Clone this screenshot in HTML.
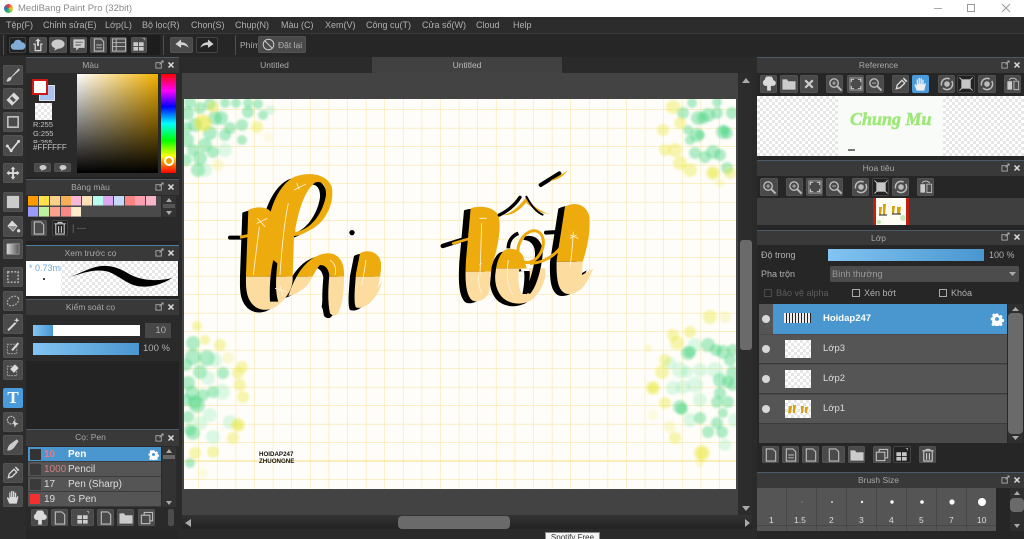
<!DOCTYPE html>
<html><head><meta charset="utf-8"><style>
html,body{margin:0;padding:0;background:#262626;width:1024px;height:539px;overflow:hidden}
#r{position:relative;width:1024px;height:539px;overflow:hidden;background:#272727;font-family:"Liberation Sans","Noto Sans CJK SC",sans-serif;font-size:9px;color:#b0b0b0;filter:blur(.3px)}
#r div{position:absolute;box-sizing:border-box}
.t{white-space:nowrap;line-height:12px}
#r .h{background:#393939;border-top:1px solid #4a5a68;text-align:center;line-height:15px;color:#a8a8a8;height:16px;font-size:8.500px;padding-right:24px}
.b{background:#4a4a4a;border-radius:2px;box-shadow:inset 0 0 0 1px #525252}
.b svg,.k svg{position:absolute;left:50%;top:50%;transform:translate(-50%,-50%);width:15px;height:15px;opacity:.88}
.k{background:#222;border-radius:2px;box-shadow:inset 0 0 0 1px #444}
.c{background-color:#fff;background-image:linear-gradient(45deg,#e6e6e6 25%,transparent 25%,transparent 75%,#e6e6e6 75%),linear-gradient(45deg,#e6e6e6 25%,transparent 25%,transparent 75%,#e6e6e6 75%);background-size:6px 6px;background-position:0 0,3px 3px}
.bar{background:linear-gradient(90deg,#82c4f2,#4a96cf)}
.row{background:#555;border-bottom:1px solid #3b3b3b}
svg{display:block}
</style></head><body><div id="r">
<svg width="0" height="0" style="position:absolute"><defs>
<symbol id="pn" viewBox="0 0 16 16"><path d="M1 15c1-3 2-5 5-5l8-9 1.500 1.500-9 8c0 3-2 4.500-5.500 4.500z" fill="#e6e6e6"/></symbol>
<symbol id="er" viewBox="0 0 16 16"><path d="M9 1l6 6-8 8-6-6z" fill="#eee"/><path d="M4.500 7.500l4 4 2.500-2.500-4-4z" fill="#555"/></symbol>
<symbol id="sq" viewBox="0 0 16 16"><rect x="2.500" y="2.500" width="11" height="11" fill="none" stroke="#ddd" stroke-width="1.600"/></symbol>
<symbol id="ln" viewBox="0 0 16 16"><path d="M2 8l4 5 8-10" fill="none" stroke="#eee" stroke-width="1.800"/><circle cx="6" cy="13" r="1.600" fill="#eee"/><circle cx="2" cy="8" r="1.600" fill="#eee"/><circle cx="14" cy="3" r="1.600" fill="#eee"/></symbol>
<symbol id="mv" viewBox="0 0 16 16"><path d="M8 1l2.500 3H9v3h3V5.500L15 8l-3 2.500V9H9v3h1.500L8 15l-2.500-3H7V9H4v1.500L1 8l3-2.500V7h3V4H5.500z" fill="#eee"/></symbol>
<symbol id="fl" viewBox="0 0 16 16"><rect x="1.500" y="1.500" width="13" height="13" fill="#ddd"/></symbol>
<symbol id="bk" viewBox="0 0 16 16"><path d="M7 1l6 6-5 6-6-6z" fill="#eee"/><path d="M3 7h9l-4 5z" fill="#999"/><circle cx="14" cy="12" r="1.800" fill="#eee"/></symbol>
<symbol id="gr" viewBox="0 0 16 16"><defs><linearGradient id="g1"><stop offset="0" stop-color="#eee"/><stop offset="1" stop-color="#555"/></linearGradient></defs><rect x="1.500" y="2.500" width="13" height="11" fill="url(#g1)" stroke="#ccc" stroke-width=".6"/></symbol>
<symbol id="ss" viewBox="0 0 16 16"><rect x="2.500" y="2.500" width="11" height="11" fill="none" stroke="#ccc" stroke-width="1.500" stroke-dasharray="2 1.500"/></symbol>
<symbol id="ls" viewBox="0 0 16 16"><ellipse cx="8" cy="8" rx="6.500" ry="4.500" transform="rotate(-30 8 8)" fill="none" stroke="#bbb" stroke-width="1.300" stroke-dasharray="2 1.300"/></symbol>
<symbol id="wd" viewBox="0 0 16 16"><path d="M2 14L10 6l1.500 1.500-8 8z" fill="#eee"/><path d="M12 1l.8 2.200L15 4l-2.200.8L12 7l-.8-2.200L9 4l2.200-.8z" fill="#eee"/></symbol>
<symbol id="sp" viewBox="0 0 16 16"><rect x="2" y="4" width="10" height="10" fill="none" stroke="#aaa" stroke-dasharray="2 1"/><path d="M6 10L13 2l1.500 1.500L8 11z" fill="#eee"/></symbol>
<symbol id="se" viewBox="0 0 16 16"><rect x="2" y="4" width="10" height="10" fill="none" stroke="#aaa" stroke-dasharray="2 1"/><path d="M10 2l4 4-5 5-4-4z" fill="#eee"/></symbol>
<symbol id="ar" viewBox="0 0 16 16"><circle cx="6" cy="6" r="4" fill="none" stroke="#ccc" stroke-width="1.300" stroke-dasharray="2 1"/><path d="M8 7l6 3-3 1-1 3z" fill="#eee"/></symbol>
<symbol id="kn" viewBox="0 0 16 16"><path d="M2 14c0-3 1-5 3-7l7-5 2 2-5 7c-2 2-4 3-7 3z" fill="#ddd"/></symbol>
<symbol id="dr" viewBox="0 0 16 16"><path d="M3 13l1-4 5-5 3 3-5 5z" fill="none" stroke="#eee" stroke-width="1.400"/><path d="M10 2l1-1 4 4-2 1z" fill="#eee"/></symbol>
<symbol id="hd" viewBox="0 0 16 16"><path d="M4 15L1.500 9l1-1L4 10V3h1.300v5h.7V1.500h1.400V8H8V2h1.400v6h.6V3.500h1.400V9l1.400-2 1 .6L12 15z" fill="#eee"/></symbol>
<symbol id="cl" viewBox="0 0 16 16"><path d="M4 13a3.500 3.500 0 0 1-.5-7 4.500 4.500 0 0 1 8.500-1 4 4 0 0 1 0 8z" fill="#8dc0ee"/></symbol>
<symbol id="up" viewBox="0 0 16 16"><path d="M3 7h2v7h6V7h2" fill="none" stroke="#eee" stroke-width="1.300"/><path d="M8 1l3 3H9v5H7V4H5z" fill="#eee"/></symbol>
<symbol id="bu" viewBox="0 0 16 16"><ellipse cx="8" cy="7" rx="7" ry="5" fill="#ddd"/><path d="M5 11l-1 3 4-2z" fill="#ddd"/></symbol>
<symbol id="ms" viewBox="0 0 16 16"><path d="M2 2h12v9H8l-3 3v-3H2z" fill="#ddd"/><path d="M4 5h8M4 8h6" stroke="#555"/></symbol>
<symbol id="dc" viewBox="0 0 16 16"><path d="M3 1.500h7l3 3v10H3z" fill="none" stroke="#ccc" stroke-width="1.200"/></symbol>
<symbol id="ld" viewBox="0 0 16 16"><path d="M3 1.500h7l3 3v10H3z" fill="none" stroke="#ccc" stroke-width="1.200"/><path d="M5 8h6M5 11h6" stroke="#ccc"/></symbol>
<symbol id="li" viewBox="0 0 16 16"><rect x="1" y="1.500" width="14" height="13" fill="none" stroke="#ccc"/><path d="M1 5.500h14M1 9.500h14M5 1.500v13" stroke="#ccc"/></symbol>
<symbol id="gd" viewBox="0 0 16 16"><path d="M2 5h5v4H2zM8 5h5v4H8zM2 10h5v4H2zM8 10h5v4H8z" fill="#ddd"/><path d="M12 1h2v2" stroke="#aaa" fill="none"/></symbol>
<symbol id="un" viewBox="0 0 16 16"><path d="M1 7l6-5v3c4 0 7 2 8 6-2-2-4-3-8-3v3z" fill="#e8e8e8"/></symbol>
<symbol id="rd" viewBox="0 0 16 16"><path d="M15 7L9 2v3c-4 0-7 2-8 6 2-2 4-3 8-3v3z" fill="#e8e8e8"/></symbol>
<symbol id="no" viewBox="0 0 16 16"><circle cx="8" cy="8" r="6.500" fill="none" stroke="#ccc" stroke-width="1.200"/><path d="M3.500 3.500l9 9" stroke="#ccc" stroke-width="1.200"/></symbol>
<symbol id="tr" viewBox="0 0 16 16"><path d="M2 3.500h12M6 3.500V2h4v1.500M3.500 4v10.500h9V4M6.500 6v7M9.500 6v7" fill="none" stroke="#ddd" stroke-width="1.200"/></symbol>
<symbol id="cu" viewBox="0 0 16 16"><path d="M4 10a3.500 3.500 0 0 1-.5-6.500 4.500 4.500 0 0 1 9 .5A3 3 0 0 1 12 10h-2v5H6v-5z" fill="#eee"/></symbol>
<symbol id="fo" viewBox="0 0 16 16"><path d="M1 3h5l1 2h8v9H1z" fill="#ddd"/></symbol>
<symbol id="cp" viewBox="0 0 16 16"><rect x="2" y="5" width="9" height="9" fill="none" stroke="#ccc" stroke-width="1.200"/><path d="M5 5V2h9v9h-3" fill="none" stroke="#ccc" stroke-width="1.200"/></symbol>
<symbol id="xx" viewBox="0 0 16 16"><path d="M4 4l8 8M12 4l-8 8" stroke="#ddd" stroke-width="2.400"/></symbol>
<symbol id="zi" viewBox="0 0 16 16"><circle cx="7" cy="7" r="4.500" fill="none" stroke="#ccc" stroke-width="1.500"/><path d="M10.500 10.500L15 15" stroke="#ccc" stroke-width="2"/><path d="M5 7h4M7 5v4" stroke="#ccc"/></symbol>
<symbol id="zo" viewBox="0 0 16 16"><circle cx="7" cy="7" r="4.500" fill="none" stroke="#ccc" stroke-width="1.500"/><path d="M10.500 10.500L15 15" stroke="#ccc" stroke-width="2"/><path d="M5 7h4" stroke="#ccc"/></symbol>
<symbol id="ft" viewBox="0 0 16 16"><rect x="1.500" y="1.500" width="13" height="13" fill="none" stroke="#aaa"/><path d="M3 6V3h3M13 6V3h-3M3 10v3h3M13 10v3h-3" fill="none" stroke="#eee"/></symbol>
<symbol id="ro" viewBox="0 0 16 16"><circle cx="8" cy="8" r="6" fill="none" stroke="#ccc" stroke-width="1.600" stroke-dasharray="14 3"/><circle cx="8" cy="8" r="3" fill="#ccc"/></symbol>
<symbol id="fs" viewBox="0 0 16 16"><path d="M3 3h10v10H3z" fill="#ddd"/><path d="M1 1l3 3M15 1l-3 3M1 15l3-3M15 15l-3-3" stroke="#ddd"/></symbol>
<symbol id="fp" viewBox="0 0 16 16"><path d="M2 5h5v9H2z" fill="#ddd"/><path d="M9 5h5v9H9z" fill="none" stroke="#ccc"/><path d="M4 4c1-3 6-3 8 0" fill="none" stroke="#ccc"/></symbol>
<symbol id="gear" viewBox="0 0 16 16"><path d="M6.500 1h3l.4 2 1.500.7 1.800-1 2 2-1 1.800.7 1.500 2 .4v3l-2 .4-.7 1.500 1 1.800-2 2-1.800-1-1.500.7-.4 2h-3l-.4-2-1.500-.7-1.800 1-2-2 1-1.800L2 9.900 0 9.500v-3l2-.4.700-1.500-1-1.800 2-2 1.800 1 1.500-.7z" transform="translate(.8 .8) scale(.9)" fill="#fff"/><circle cx="8" cy="8" r="2.200" fill="#4a96cf"/></symbol>
<symbol id="pop" viewBox="0 0 10 10"><rect x="1" y="3" width="6" height="6" fill="none" stroke="#aaa"/><path d="M5 5l4-4M7 1h2v2" fill="none" stroke="#aaa"/></symbol>
</defs></svg>

<!-- title bar -->
<div style="left:0;top:0;width:1024px;height:17px;background:#fff"></div>
<div style="left:4px;top:4px;width:9px;height:9px;border-radius:50%;background:conic-gradient(#e33,#ec3,#3b5,#27c,#e33)"></div>
<div class="t" style="left:18px;top:3px;color:#8a8a8a;font-size:9.500px">MediBang Paint Pro (32bit)</div>
<div style="left:934px;top:8px;width:8px;height:1px;background:#aaa"></div>
<div style="left:967px;top:4px;width:8px;height:8px;border:1px solid #999"></div>
<svg style="position:absolute;left:1001px;top:3px" width="10" height="10"><path d="M1 1l8 8M9 1l-8 8" stroke="#999"/></svg>

<!-- menu -->
<div style="left:0;top:17px;width:1024px;height:16px;background:#2c2c2c"></div>
<div style="left:0;top:33px;width:1024px;height:1px;background:#383838"></div>
<div class="t" style="left:6px;top:19px">Tệp(F)</div><div class="t" style="left:43px;top:19px">Chỉnh sửa(E)</div><div class="t" style="left:105px;top:19px">Lớp(L)</div><div class="t" style="left:142px;top:19px">Bộ lọc(R)</div><div class="t" style="left:191px;top:19px">Chọn(S)</div><div class="t" style="left:235px;top:19px">Chụp(N)</div><div class="t" style="left:281px;top:19px">Màu (C)</div><div class="t" style="left:325px;top:19px">Xem(V)</div><div class="t" style="left:366px;top:19px">Công cụ(T)</div><div class="t" style="left:422px;top:19px">Cửa sổ(W)</div><div class="t" style="left:476px;top:19px">Cloud</div><div class="t" style="left:513px;top:19px">Help</div>

<!-- toolbar -->
<div style="left:0;top:34px;width:1024px;height:22px;background:#262626"></div>
<div style="left:3px;top:35px;width:1px;height:20px;background:#3d5468"></div>
<div style="left:163px;top:35px;width:1px;height:20px;background:#3d5468"></div>
<div style="left:235px;top:35px;width:1px;height:20px;background:#3d5468"></div>
<div style="left:7px;top:35px;width:153px;height:20px;background:#1d1d1d"></div>
<div class="k" style="left:9px;top:37px;width:17px;height:16px"><svg><use href="#cl"/></svg></div>
<div class="b" style="left:29px;top:37px;width:18px;height:16px"><svg><use href="#up"/></svg></div>
<div class="b" style="left:49px;top:37px;width:18px;height:16px"><svg><use href="#bu"/></svg></div>
<div class="b" style="left:70px;top:37px;width:17px;height:16px"><svg><use href="#ms"/></svg></div>
<div class="b" style="left:90px;top:37px;width:17px;height:16px"><svg><use href="#ld"/></svg></div>
<div class="b" style="left:110px;top:37px;width:17px;height:16px"><svg><use href="#li"/></svg></div>
<div class="b" style="left:131px;top:37px;width:16px;height:16px"><svg><use href="#gd"/></svg></div>
<div class="b" style="left:170px;top:37px;width:23px;height:16px"><svg><use href="#un"/></svg></div>
<div class="k" style="left:196px;top:37px;width:22px;height:16px"><svg><use href="#rd"/></svg></div>
<div class="t" style="left:240px;top:39px;font-size:8.500px">Phím</div>
<div class="b" style="left:258px;top:36px;width:48px;height:17px"></div>
<svg style="position:absolute;left:262px;top:38px" width="13" height="13"><use href="#no"/></svg>
<div class="t" style="left:278px;top:39px;font-size:8.500px">Đặt lại</div>

<!-- left tools -->
<div style="left:0;top:56px;width:26px;height:483px;background:#2c2c2c"></div>
<div class="b" style="left:3px;top:65px;width:20px;height:20px"><svg><use href="#pn"/></svg></div>
<div class="b" style="left:3px;top:88px;width:20px;height:21px"><svg><use href="#er"/></svg></div>
<div class="b" style="left:3px;top:112px;width:20px;height:20px"><svg><use href="#sq"/></svg></div>
<div class="b" style="left:3px;top:135px;width:20px;height:21px"><svg><use href="#ln"/></svg></div>
<div class="b" style="left:3px;top:163px;width:20px;height:20px"><svg><use href="#mv"/></svg></div>
<div class="b" style="left:3px;top:192px;width:20px;height:20px"><svg><use href="#fl"/></svg></div>
<div class="b" style="left:3px;top:216px;width:20px;height:21px"><svg><use href="#bk"/></svg></div>
<div class="b" style="left:3px;top:239px;width:20px;height:20px"><svg><use href="#gr"/></svg></div>
<div class="b" style="left:3px;top:267px;width:20px;height:20px"><svg><use href="#ss"/></svg></div>
<div class="b" style="left:3px;top:291px;width:20px;height:20px"><svg><use href="#ls"/></svg></div>
<div class="b" style="left:3px;top:314px;width:20px;height:20px"><svg><use href="#wd"/></svg></div>
<div class="b" style="left:3px;top:337px;width:20px;height:21px"><svg><use href="#sp"/></svg></div>
<div class="b" style="left:3px;top:360px;width:20px;height:20px"><svg><use href="#se"/></svg></div>
<div style="left:3px;top:388px;width:20px;height:20px;background:#4a9bdc;border-radius:2px;color:#fff;font:bold 17px/20px 'Liberation Serif',serif;text-align:center">T</div>
<div class="b" style="left:3px;top:412px;width:20px;height:20px"><svg><use href="#ar"/></svg></div>
<div class="b" style="left:3px;top:435px;width:20px;height:20px"><svg><use href="#kn"/></svg></div>
<div class="b" style="left:3px;top:463px;width:20px;height:20px"><svg><use href="#dr"/></svg></div>
<div class="b" style="left:3px;top:486px;width:20px;height:21px"><svg><use href="#hd"/></svg></div>

<!-- left panels -->
<div style="left:26px;top:57px;width:153px;height:473px;background:#232323"></div>
<!-- colour -->
<div class="h" style="left:26px;top:57px;width:153px">Màu</div>
<div style="left:26px;top:73px;width:153px;height:104px;background:#2a2a2a"></div>
<svg style="position:absolute;left:155px;top:60px" width="9" height="9"><use href="#pop"/></svg>
<svg style="position:absolute;left:166px;top:60px" width="10" height="10"><use href="#xx"/></svg>
<div style="left:39px;top:85px;width:16px;height:16px;background:#a9c3f0;border:1px solid #dde"></div>
<div style="left:32px;top:79px;width:16px;height:16px;background:#fff;border:2px solid #d01818"></div>
<div class="c" style="left:35px;top:103px;width:17px;height:17px"></div>
<div class="t" style="left:33px;top:120px;font-size:7.500px;line-height:9px;color:#c4c4c4">R:255<br>G:255</div>
<div class="t" style="left:33px;top:139px;font-size:7.500px;line-height:7px;height:4px;overflow:hidden;color:#c4c4c4">B:255</div>
<div class="t" style="left:33px;top:143px;font-size:8px;line-height:9px;color:#c4c4c4">#FFFFFF</div>
<div class="b" style="left:34px;top:163px;width:17px;height:9px"><svg style="width:8px;height:8px"><use href="#bu"/></svg></div>
<div class="b" style="left:54px;top:163px;width:17px;height:9px"><svg style="width:8px;height:8px"><use href="#bu"/></svg></div>
<div style="left:77px;top:74px;width:81px;height:99px;background:linear-gradient(to bottom,transparent,#000),linear-gradient(to right,#fff,#f2b000)"></div>
<div style="left:161px;top:74px;width:15px;height:99px;background:linear-gradient(to bottom,#f00 0%,#f0f 17%,#00f 33%,#0ff 50%,#0f0 67%,#ff0 83%,#f80 90%,#f00 100%)"></div>
<div style="left:164px;top:156px;width:10px;height:10px;border-radius:50%;border:2px solid #fff;background:#f3a000"></div>
<!-- palette -->
<div class="h" style="left:26px;top:179px;width:153px">Bảng màu</div>
<div style="left:26px;top:195px;width:153px;height:46px;background:#2a2a2a"></div>
<svg style="position:absolute;left:155px;top:182px" width="9" height="9"><use href="#pop"/></svg>
<svg style="position:absolute;left:166px;top:182px" width="10" height="10"><use href="#xx"/></svg>
<div style="left:28px;top:196px;width:133px;height:21px;background:#4a4a4a"></div>
<svg style="position:absolute;left:28px;top:196px" width="133" height="21">
<rect x="0" y="0" width="10" height="9.500" fill="#ff9a00"/><rect x="11" y="0" width="10" height="9.500" fill="#ffe24a"/><rect x="22" y="0" width="10" height="9.500" fill="#fcd28a"/><rect x="33" y="0" width="10" height="9.500" fill="#f8ae56"/><rect x="43" y="0" width="10" height="9.500" fill="#f8b8d8"/><rect x="54" y="0" width="10" height="9.500" fill="#fde0b8"/><rect x="65" y="0" width="10" height="9.500" fill="#b8fbf0"/><rect x="75" y="0" width="10" height="9.500" fill="#dba8f0"/><rect x="86" y="0" width="10" height="9.500" fill="#c4daf8"/><rect x="97" y="0" width="10" height="9.500" fill="#f98484"/><rect x="107" y="0" width="10" height="9.500" fill="#f8a0b0"/><rect x="118" y="0" width="10" height="9.500" fill="#f8b4c8"/>
<rect x="0" y="11" width="10" height="9.500" fill="#9a9af8"/><rect x="11" y="11" width="10" height="9.500" fill="#bcf0a0"/><rect x="22" y="11" width="10" height="9.500" fill="#fca090"/><rect x="33" y="11" width="10" height="9.500" fill="#f88888"/><rect x="43" y="11" width="10" height="9.500" fill="#fdeccc"/></svg>
<div style="left:162px;top:196px;width:14px;height:21px;background:#333"></div>
<svg style="position:absolute;left:162px;top:196px" width="14" height="21"><path d="M4 6l3-4 3 4zM4 15l3 4 3-4z" fill="#aaa"/><rect x="1" y="8" width="12" height="4" fill="#555"/></svg>
<div class="b" style="left:31px;top:220px;width:16px;height:16px"><svg><use href="#dc"/></svg></div>
<div class="k" style="left:52px;top:220px;width:16px;height:16px"><svg><use href="#tr"/></svg></div>
<div class="t" style="left:72px;top:222px;color:#777">| ---</div>
<div style="left:26px;top:245px;width:153px;height:1px;background:#4f7fa0"></div>
<!-- preview -->
<div class="h" style="left:26px;top:246px;width:153px;border-top:0;height:15px">Xem trước cọ</div>
<svg style="position:absolute;left:155px;top:248px" width="9" height="9"><use href="#pop"/></svg>
<svg style="position:absolute;left:166px;top:248px" width="10" height="10"><use href="#xx"/></svg>
<div class="c" style="left:26px;top:261px;width:152px;height:35px"></div>
<div style="left:26px;top:261px;width:35px;height:35px;background:#fff;overflow:hidden"></div>
<div class="t" style="left:29px;top:262px;width:32px;overflow:hidden;color:#6fa8d8;font-size:9px">* 0.73mm</div>
<div style="left:43px;top:278px;width:2px;height:2px;background:#444"></div>
<svg style="position:absolute;left:61px;top:261px" width="117" height="35"><path d="M9 16C20 12 30 6 40 5C52 4 60 8 70 14C80 19 95 21 111 17C100 24 88 27 76 25C66 23 58 15 48 11C35 7 22 12 9 16Z" fill="#000"/></svg>
<div style="left:26px;top:299px;width:153px;height:1px;background:#4a5a68"></div>
<div class="h" style="left:26px;top:300px;width:153px;border-top:0;height:15px">Kiểm soát cọ</div>
<svg style="position:absolute;left:155px;top:302px" width="9" height="9"><use href="#pop"/></svg>
<svg style="position:absolute;left:166px;top:302px" width="10" height="10"><use href="#xx"/></svg>
<div style="left:26px;top:315px;width:153px;height:46px;background:#2a2a2a"></div>
<div style="left:33px;top:325px;width:107px;height:11px;background:#fff"></div>
<div class="bar" style="left:33px;top:325px;width:20px;height:11px"></div>
<div style="left:145px;top:323px;width:26px;height:15px;background:#474747;text-align:right;padding-right:5px;line-height:15px;font-size:9.500px">10</div>
<div class="bar" style="left:33px;top:343px;width:106px;height:12px"></div>
<div class="t" style="left:143px;top:343px;font-size:9.500px">100 %</div>
<!-- brush list -->
<div style="left:26px;top:429px;width:153px;height:1px;background:#4a5a68"></div>
<div class="h" style="left:26px;top:430px;width:153px;border-top:0;height:16px">Cọ: Pen</div>
<svg style="position:absolute;left:155px;top:433px" width="9" height="9"><use href="#pop"/></svg>
<svg style="position:absolute;left:166px;top:433px" width="10" height="10"><use href="#xx"/></svg>
<div style="left:26px;top:446px;width:153px;height:84px;background:#2a2a2a"></div>
<div class="row" style="left:28px;top:447px;width:133px;height:15px;background:#4a96cf"></div>
<div class="row" style="left:28px;top:462px;width:133px;height:15px"></div>
<div class="row" style="left:28px;top:477px;width:133px;height:15px"></div>
<div class="row" style="left:28px;top:492px;width:133px;height:15px"></div>
<div style="left:30px;top:449px;width:11px;height:11px;background:#333"></div>
<div style="left:30px;top:464px;width:11px;height:11px;background:#3a3a3a"></div>
<div style="left:30px;top:479px;width:11px;height:11px;background:#3a3a3a"></div>
<div style="left:30px;top:494px;width:10px;height:10px;background:#f33030"></div>
<div class="t" style="left:44px;top:449px;color:#e87a8a;font-size:10px;font-weight:bold">10</div>
<div class="t" style="left:44px;top:464px;color:#d08080;font-size:10px">1000</div>
<div class="t" style="left:44px;top:479px;color:#ddd;font-size:10px">17</div>
<div class="t" style="left:44px;top:494px;color:#ddd;font-size:10px">19</div>
<div class="t" style="left:68px;top:449px;color:#fff;font-size:10px;font-weight:bold">Pen</div>
<div class="t" style="left:68px;top:464px;color:#ddd;font-size:10px">Pencil</div>
<div class="t" style="left:68px;top:479px;color:#ddd;font-size:10px">Pen (Sharp)</div>
<div class="t" style="left:68px;top:494px;color:#ddd;font-size:10px">G Pen</div>
<svg style="position:absolute;left:148px;top:449px" width="11" height="11"><use href="#gear"/></svg>
<div style="left:162px;top:447px;width:14px;height:60px;background:#333"></div>
<svg style="position:absolute;left:162px;top:447px" width="14" height="60"><path d="M4 6l3-4 3 4zM4 54l3 4 3-4z" fill="#aaa"/><rect x="1" y="8" width="12" height="4" fill="#666"/></svg>
<div class="b" style="left:31px;top:509px;width:17px;height:17px"><svg><use href="#cu"/></svg></div>
<div class="b" style="left:51px;top:509px;width:17px;height:17px"><svg><use href="#dc"/></svg></div>
<div class="b" style="left:71px;top:509px;width:23px;height:17px"><svg><use href="#gd"/></svg></div>
<div class="b" style="left:97px;top:509px;width:17px;height:17px"><svg><use href="#dc"/></svg></div>
<div class="b" style="left:117px;top:509px;width:17px;height:17px"><svg><use href="#fo"/></svg></div>
<div class="b" style="left:138px;top:509px;width:17px;height:17px"><svg><use href="#cp"/></svg></div>
<div style="left:168px;top:509px;width:6px;height:17px;background:#4c4c4c;border-radius:2px"></div>

<!-- canvas area -->
<div style="left:179px;top:57px;width:578px;height:482px;background:#2a2a2a"></div>
<div style="left:182px;top:57px;width:190px;height:16px;background:#2b2b2b;text-align:center;line-height:17px;color:#aaa;font-size:8.500px;padding-right:5px">Untitled</div>
<div style="left:372px;top:57px;width:190px;height:16px;background:#414141;text-align:center;line-height:17px;color:#bbb;font-size:8.500px">Untitled</div>
<div style="left:182px;top:73px;width:556px;height:442px;background:#434343"></div>
<svg style="position:absolute;left:184px;top:99px" width="552" height="390" viewBox="184 99 552 390">
<defs><pattern id="gp" x="180.400" y="91.500" width="18.600" height="18.500" patternUnits="userSpaceOnUse"><path d="M18.500 0v18.500M0 18.400h18.600" stroke="#f9e6a8" stroke-width="1" fill="none"/></pattern>
<filter id="bl" x="-5%" y="-5%" width="110%" height="110%"><feGaussianBlur stdDeviation="1"/></filter>
<path id="la" fill-rule="evenodd" d="M85 150C110 138 140 140 152 155C165 110 190 65 225 50C265 35 320 40 335 80C345 130 315 190 270 210C250 222 235 228 222 228L218 350C220 380 205 410 175 435C150 455 115 455 95 430C75 405 78 370 78 340ZM225 215C235 150 255 90 285 68C305 60 320 75 318 105C310 155 280 195 250 208C240 213 230 216 225 215Z"/>
<path id="lb" d="M205 408C230 330 270 285 320 280C355 278 375 305 372 352C372 395 368 430 355 458C348 470 338 468 330 460C322 425 325 380 328 345C325 325 315 315 300 315C285 330 275 360 260 378C245 392 225 404 205 408Z"/>
<path id="lc" d="M420 280C445 265 480 278 483 310C484 340 478 365 472 385L486 365C480 392 465 415 450 428C435 442 420 446 408 442C400 430 405 380 408 340Z"/>
<path id="ld2" d="M122 145C150 135 190 140 205 165C215 200 205 260 185 320L178 395C170 420 140 430 125 420C105 400 105 350 108 300Z"/>
<path id="le" fill-rule="evenodd" d="M225 270C245 262 270 268 280 290L290 325L345 325C352 350 335 395 305 420C280 435 245 435 220 415C198 395 192 360 197 335C200 305 210 280 225 270ZM268 328L298 325C302 350 295 385 292 402L275 402C265 380 262 350 268 328Z"/>
<path id="lf" d="M405 140C430 125 470 130 478 170C482 220 470 270 458 305L456 345L490 325C480 350 470 370 455 385C440 400 420 405 405 400C385 390 378 360 380 300Z"/>
<clipPath id="u1"><rect x="0" y="0" width="600" height="350"/></clipPath><clipPath id="d1"><rect x="0" y="350" width="600" height="200"/></clipPath>
<clipPath id="u2"><rect x="0" y="0" width="190" height="335"/><rect x="190" y="0" width="170" height="325"/><rect x="360" y="0" width="200" height="305"/></clipPath>
<clipPath id="d2"><rect x="0" y="335" width="190" height="200"/><rect x="190" y="325" width="170" height="200"/><rect x="360" y="305" width="200" height="200"/></clipPath>
</defs>
<rect x="184" y="99" width="552" height="390" fill="#fffdf9"/>
<rect x="184" y="99" width="552" height="390" fill="url(#gp)"/>
<path d="M184 461h552" stroke="#f8de7a"/>
<g filter="url(#bl)">
<g fill="#4cd684" fill-opacity=".44">
<circle cx="221" cy="118" r="7"/><circle cx="248" cy="112" r="6"/><circle cx="263" cy="115" r="5"/><circle cx="242" cy="140" r="5"/><circle cx="230" cy="128" r="6"/><circle cx="242" cy="125" r="6"/><circle cx="187" cy="140" r="7"/><circle cx="200" cy="158" r="7"/><circle cx="198" cy="170" r="7"/><circle cx="213" cy="152" r="6"/><circle cx="193" cy="150" r="6"/><circle cx="210" cy="133" r="7"/><circle cx="187" cy="113" r="7"/><circle cx="200" cy="108" r="6"/><circle cx="195" cy="125" r="7"/><circle cx="225" cy="103" r="5"/><circle cx="258" cy="104" r="5"/><circle cx="190" cy="102" r="6"/><circle cx="215" cy="118" r="7"/><circle cx="225" cy="135" r="6"/><circle cx="205" cy="145" r="7"/><circle cx="186" cy="128" r="6"/><circle cx="186" cy="160" r="6"/><circle cx="210" cy="104" r="6"/><circle cx="236" cy="103" r="5"/><circle cx="248" cy="103" r="5"/>
<circle cx="683" cy="113" r="6"/><circle cx="698" cy="118" r="7"/><circle cx="708" cy="115" r="7"/><circle cx="717" cy="113" r="6"/><circle cx="732" cy="113" r="6"/><circle cx="723" cy="132" r="7"/><circle cx="727" cy="133" r="6"/><circle cx="724" cy="130" r="5"/><circle cx="697" cy="135" r="7"/><circle cx="688" cy="130" r="5"/><circle cx="690" cy="140" r="5"/><circle cx="713" cy="152" r="7"/><circle cx="695" cy="153" r="6"/><circle cx="705" cy="157" r="6"/><circle cx="692" cy="103" r="5"/><circle cx="717" cy="102" r="5"/><circle cx="727" cy="168" r="6"/><circle cx="700" cy="135" r="5"/><circle cx="720" cy="155" r="6"/><circle cx="703" cy="118" r="6"/>
<circle cx="193" cy="357" r="8"/><circle cx="207" cy="358" r="8"/><circle cx="193" cy="343" r="7"/><circle cx="223" cy="373" r="6"/><circle cx="188" cy="383" r="7"/><circle cx="197" cy="405" r="8"/><circle cx="195" cy="402" r="7"/><circle cx="203" cy="395" r="6"/><circle cx="188" cy="417" r="6"/><circle cx="193" cy="433" r="7"/><circle cx="190" cy="430" r="6"/><circle cx="213" cy="392" r="6"/><circle cx="190" cy="463" r="5"/><circle cx="186" cy="400" r="6"/><circle cx="200" cy="372" r="7"/><circle cx="186" cy="365" r="6"/><circle cx="192" cy="393" r="7"/>
<circle cx="688" cy="353" r="7"/><circle cx="690" cy="352" r="6"/><circle cx="708" cy="345" r="7"/><circle cx="723" cy="352" r="7"/><circle cx="730" cy="360" r="6"/><circle cx="733" cy="373" r="7"/><circle cx="720" cy="380" r="7"/><circle cx="728" cy="382" r="6"/><circle cx="720" cy="393" r="6"/><circle cx="728" cy="402" r="6"/><circle cx="717" cy="402" r="6"/><circle cx="680" cy="407" r="7"/><circle cx="682" cy="409" r="6"/><circle cx="700" cy="418" r="6"/><circle cx="717" cy="423" r="6"/><circle cx="723" cy="413" r="5"/><circle cx="708" cy="432" r="6"/><circle cx="722" cy="432" r="6"/><circle cx="733" cy="385" r="6"/><circle cx="716" cy="350" r="6"/><circle cx="733" cy="350" r="6"/>
</g>
<g fill="#7fe8b0" fill-opacity=".28">
<circle cx="200" cy="423" r="7"/><circle cx="213" cy="437" r="7"/><circle cx="230" cy="422" r="7"/><circle cx="210" cy="415" r="7"/><circle cx="673" cy="388" r="7"/><circle cx="683" cy="387" r="7"/><circle cx="687" cy="372" r="6"/><circle cx="670" cy="363" r="6"/><circle cx="695" cy="385" r="8"/><circle cx="700" cy="400" r="7"/><circle cx="735" cy="420" r="7"/><circle cx="700" cy="370" r="7"/><circle cx="725" cy="445" r="6"/><circle cx="680" cy="370" r="8"/><circle cx="690" cy="420" r="7"/><circle cx="715" cy="370" r="8"/><circle cx="695" cy="345" r="7"/><circle cx="222" cy="392" r="8"/><circle cx="215" cy="360" r="7"/><circle cx="208" cy="378" r="7"/><circle cx="225" cy="150" r="7"/><circle cx="270" cy="110" r="5"/><circle cx="205" cy="170" r="7"/>
</g>
<g fill="#e8e83c" fill-opacity=".4">
<circle cx="203" cy="123" r="9"/><circle cx="203" cy="123" r="7"/><circle cx="213" cy="107" r="6"/><circle cx="257" cy="127" r="6"/><circle cx="268" cy="137" r="5" fill-opacity=".12"/><circle cx="218" cy="165" r="6" fill-opacity=".2"/><circle cx="663" cy="130" r="6"/><circle cx="665" cy="150" r="6"/><circle cx="675" cy="150" r="7"/><circle cx="680" cy="163" r="7"/><circle cx="690" cy="170" r="7"/><circle cx="713" cy="173" r="7"/><circle cx="713" cy="173" r="5"/><circle cx="673" cy="107" r="7"/><circle cx="680" cy="123" r="6"/><circle cx="730" cy="173" r="6"/><circle cx="720" cy="183" r="5" fill-opacity=".2"/>
<circle cx="197" cy="326" r="5"/><circle cx="220" cy="345" r="6"/><circle cx="228" cy="358" r="6" fill-opacity=".2"/><circle cx="242" cy="367" r="6"/><circle cx="238" cy="373" r="6"/><circle cx="243" cy="397" r="6"/><circle cx="240" cy="385" r="6"/><circle cx="238" cy="425" r="7"/><circle cx="238" cy="425" r="5"/><circle cx="233" cy="438" r="6"/><circle cx="213" cy="452" r="6"/><circle cx="195" cy="453" r="6"/><circle cx="203" cy="473" r="5" fill-opacity=".15"/><circle cx="205" cy="340" r="5"/>
<circle cx="673" cy="335" r="6"/><circle cx="690" cy="332" r="6"/><circle cx="710" cy="317" r="7"/><circle cx="677" cy="343" r="7"/><circle cx="662" cy="372" r="7"/><circle cx="653" cy="388" r="7"/><circle cx="653" cy="388" r="5"/><circle cx="665" cy="403" r="6"/><circle cx="653" cy="415" r="5" fill-opacity=".15"/><circle cx="670" cy="427" r="6" fill-opacity=".2"/><circle cx="675" cy="438" r="6"/><circle cx="702" cy="453" r="8"/><circle cx="702" cy="453" r="6"/><circle cx="648" cy="348" r="4" fill-opacity=".2"/><circle cx="700" cy="462" r="5" fill-opacity=".2"/><circle cx="665" cy="360" r="6"/><circle cx="725" cy="317" r="6" fill-opacity=".2"/>
</g></g>
<text x="259" y="456" font-family="Liberation Sans" font-size="6.200" font-weight="bold" fill="#111">HOIDAP247</text>
<text x="259" y="463" font-family="Liberation Sans" font-size="6.200" font-weight="bold" fill="#111">ZHUONGNE</text>

<!-- thi -->
<g transform="translate(220 160) scale(.33333)">
<circle cx="396" cy="218" r="8" fill="#000"/>
<g fill="#000" transform="translate(-18 8)"><use href="#la"/><use href="#lb"/><use href="#lc"/></g>
<path d="M296 300C318 315 312 400 305 440C312 462 325 468 340 466L335 340C335 320 320 300 296 300Z" fill="#000"/>
<path d="M30 233H70" stroke="#000" stroke-width="12" stroke-linecap="round"/>
<path d="M60 232L88 226" stroke="#eeab0e" stroke-width="9"/>
<g clip-path="url(#d1)" fill="#fddca0"><use href="#la"/><use href="#lb"/><use href="#lc"/></g>
<g clip-path="url(#u1)" fill="#eeab0e"><use href="#la"/><use href="#lb"/><use href="#lc"/></g>
<path d="M160 300C150 340 148 390 150 425L175 425C165 395 168 350 172 310Z" fill="#000"/>
<path d="M205 130C192 190 185 270 180 345M118 200C112 250 105 300 100 345M330 300C345 310 350 325 345 345M438 300C435 325 430 350 425 375M110 190L142 175M112 175L135 200M222 90L258 72M230 70L238 88M165 385L200 395M180 378L190 410" stroke="#fff4d8" stroke-width="2.500" fill="none"/>
</g>

<!-- tot -->
<g transform="translate(430 160) scale(.33333)">
<g fill="#000" transform="translate(-20 6)"><use href="#ld2"/><use href="#lf"/></g>
<g fill="#000" transform="translate(-16 8)"><use href="#le"/></g>
<path d="M38 258L95 240" stroke="#000" stroke-width="13" stroke-linecap="round"/>
<path d="M70 250L125 234" stroke="#eeab0e" stroke-width="8" stroke-linecap="round"/>
<path d="M348 218L385 216" stroke="#000" stroke-width="12" stroke-linecap="round"/>
<g clip-path="url(#d2)" fill="#fddca0"><use href="#ld2"/><use href="#le"/><use href="#lf"/></g>
<g clip-path="url(#u2)" fill="#eeab0e"><use href="#ld2"/><use href="#le"/><use href="#lf"/></g>
<path d="M235 265C235 245 245 228 265 220" fill="none" stroke="#000" stroke-width="11"/>
<path d="M285 230C315 220 340 245 338 280C335 325 320 380 300 402L285 395C300 365 315 315 315 280C315 255 300 240 280 240Z" fill="#000"/>
<ellipse cx="302" cy="260" rx="35" ry="50" transform="rotate(25 302 260)" fill="none" stroke="#eeab0e" stroke-width="9"/>
<path d="M300 310C330 310 365 295 390 265" fill="none" stroke="#eeab0e" stroke-width="9"/>
<path d="M208 165C230 155 255 135 270 112" fill="none" stroke="#000" stroke-width="10" stroke-linecap="round"/>
<path d="M220 165C250 158 270 135 288 112C305 135 330 155 362 163C335 160 312 150 288 128C268 152 245 168 220 165Z" fill="#eeab0e"/>
<path d="M288 108C300 130 315 155 340 165" stroke="#000" stroke-width="6" fill="none"/>
<path d="M332 75L388 40" stroke="#000" stroke-width="12" stroke-linecap="round"/>
<path d="M360 62C380 52 398 42 412 32C400 50 380 62 360 62Z" fill="#eeab0e"/>
<path d="M155 190L150 345M148 175H170M155 310L148 315M145 345C145 375 150 390 155 400M235 300C228 345 232 385 250 405M430 215C428 250 425 290 420 320M420 225L445 235M420 235L440 225" stroke="#fff4d8" stroke-width="2.500" fill="none"/>
</g>
</svg>
<!-- vertical scroll -->
<div style="left:738px;top:73px;width:14px;height:442px;background:#2c2c2c"></div>
<div style="left:740px;top:240px;width:12px;height:110px;background:#6a6a6a;border-radius:3px"></div>
<svg style="position:absolute;left:740px;top:73px" width="12" height="442"><path d="M2 10l4-5 4 5z" fill="#aaa"/><path d="M2 433l4 5 4-5z" fill="#aaa"/></svg>
<!-- horizontal scroll -->
<div style="left:182px;top:515px;width:570px;height:14px;background:linear-gradient(#333,#232323)"></div>
<div style="left:398px;top:516px;width:112px;height:13px;background:#6a6a6a;border-radius:4px"></div>
<svg style="position:absolute;left:182px;top:516px" width="570" height="13"><path d="M9 3L3 7l6 4z" fill="#aaa"/><path d="M563 3l5 4-5 4z" fill="#aaa"/></svg>
<div style="left:545px;top:532px;width:55px;height:7px;background:#f4f4f4;border:1px solid #888;border-bottom:0;color:#333;font-size:8px;line-height:9px;text-align:center;overflow:hidden">Spotify Free</div>

<!-- right panels -->
<div style="left:757px;top:57px;width:267px;height:482px;background:#262626"></div>
<div class="h" style="left:757px;top:57px;width:267px">Reference</div>
<svg style="position:absolute;left:1001px;top:60px" width="9" height="9"><use href="#pop"/></svg>
<svg style="position:absolute;left:1012px;top:60px" width="10" height="10"><use href="#xx"/></svg>
<div class="b" style="left:760px;top:75px;width:17px;height:18px"><svg><use href="#cu"/></svg></div>
<div class="b" style="left:780px;top:75px;width:18px;height:18px"><svg><use href="#fo"/></svg></div>
<div class="b" style="left:800px;top:75px;width:18px;height:18px"><svg><use href="#xx"/></svg></div>
<div class="b" style="left:826px;top:75px;width:17px;height:18px"><svg><use href="#zi"/></svg></div>
<div class="b" style="left:847px;top:75px;width:17px;height:18px"><svg><use href="#ft"/></svg></div>
<div class="b" style="left:866px;top:75px;width:18px;height:18px"><svg><use href="#zo"/></svg></div>
<div class="b" style="left:892px;top:75px;width:17px;height:18px"><svg><use href="#dr"/></svg></div>
<div style="left:912px;top:75px;width:17px;height:18px;background:#4a9bdc;border-radius:2px"></div>
<svg style="position:absolute;left:913px;top:76px" width="15" height="16"><use href="#hd"/></svg>
<div class="b" style="left:938px;top:75px;width:17px;height:18px"><svg><use href="#ro"/></svg></div>
<div class="k" style="left:957px;top:75px;width:18px;height:18px"><svg><use href="#fs"/></svg></div>
<div class="b" style="left:978px;top:75px;width:18px;height:18px"><svg><use href="#ro"/></svg></div>
<div class="b" style="left:1004px;top:75px;width:17px;height:18px"><svg><use href="#fp"/></svg></div>
<div class="c" style="left:757px;top:96px;width:267px;height:60px"></div>
<div style="left:838px;top:96px;width:105px;height:60px;background:#f9fbf8"></div>
<svg style="position:absolute;left:838px;top:96px" width="105" height="60"><text x="12" y="29" font-family="Liberation Serif" font-style="italic" font-weight="bold" font-size="18" fill="#9ee878" stroke="#9ee878" stroke-width=".5">Chung Mu</text><rect x="10" y="53" width="7" height="2" fill="#777"/></svg>
<div class="h" style="left:757px;top:160px;width:267px">Hoa tiêu</div>
<svg style="position:absolute;left:1001px;top:163px" width="9" height="9"><use href="#pop"/></svg>
<svg style="position:absolute;left:1012px;top:163px" width="10" height="10"><use href="#xx"/></svg>
<div class="b" style="left:760px;top:178px;width:18px;height:18px"><svg><use href="#zi"/></svg></div>
<div class="b" style="left:786px;top:178px;width:17px;height:18px"><svg><use href="#zi"/></svg></div>
<div class="b" style="left:806px;top:178px;width:17px;height:18px"><svg><use href="#ft"/></svg></div>
<div class="b" style="left:826px;top:178px;width:17px;height:18px"><svg><use href="#zo"/></svg></div>
<div class="b" style="left:852px;top:178px;width:17px;height:18px"><svg><use href="#ro"/></svg></div>
<div class="k" style="left:872px;top:178px;width:17px;height:18px"><svg><use href="#fs"/></svg></div>
<div class="b" style="left:892px;top:178px;width:17px;height:18px"><svg><use href="#ro"/></svg></div>
<div class="b" style="left:917px;top:178px;width:17px;height:18px"><svg><use href="#fp"/></svg></div>
<div style="left:757px;top:198px;width:267px;height:27px;background:#3f3f3f"></div>
<div style="left:873px;top:198px;width:36px;height:27px;background:#fffdf4;border-left:3px solid #c02010;border-right:3px solid #c02010"></div>
<svg style="position:absolute;left:876px;top:198px" width="30" height="27"><path d="M3 9h3l-1 8H3zM7 6h3l-1 11H7zM16 8h3l-1 8h-2zM21 9h4l-1 7h-3z" fill="#d9a010"/><path d="M3 17h8M16 16h9" stroke="#222"/><circle cx="3" cy="24" r="2" fill="#bfe9b0"/><circle cx="27" cy="20" r="3" fill="#c8ecc0"/></svg>
<!-- layers -->
<div class="h" style="left:757px;top:230px;width:267px;height:15px">Lớp</div>
<svg style="position:absolute;left:1001px;top:232px" width="9" height="9"><use href="#pop"/></svg>
<svg style="position:absolute;left:1012px;top:232px" width="10" height="10"><use href="#xx"/></svg>
<div class="t" style="left:761px;top:249px">Độ trong</div>
<div class="bar" style="left:828px;top:249px;width:156px;height:12px"></div>
<div class="t" style="left:989px;top:249px">100 %</div>
<div class="t" style="left:761px;top:268px">Pha trộn</div>
<div style="left:830px;top:266px;width:189px;height:16px;background:#4c4c4c;border-radius:2px"></div>
<div class="t" style="left:832px;top:268px;color:#999">Bình thường</div>
<svg style="position:absolute;left:1008px;top:271px" width="9" height="6"><path d="M1 1h7L4.500 5z" fill="#aaa"/></svg>
<div style="left:764px;top:289px;width:8px;height:8px;border:1px solid #4a4a4a"></div>
<div class="t" style="left:776px;top:287px;color:#5c5c5c">Bảo vệ alpha</div>
<div style="left:852px;top:289px;width:8px;height:8px;border:1px solid #aaa"></div>
<div class="t" style="left:864px;top:287px">Xén bớt</div>
<div style="left:939px;top:289px;width:8px;height:8px;border:1px solid #aaa"></div>
<div class="t" style="left:951px;top:287px">Khóa</div>
<div style="left:759px;top:304px;width:248px;height:139px;background:#4a4a4a"></div>
<div style="left:759px;top:304px;width:14px;height:30px;background:#555"></div>
<div style="left:773px;top:304px;width:234px;height:30px;background:#4a96cf"></div>
<div class="row" style="left:759px;top:335px;width:248px;height:29px"></div>
<div class="row" style="left:759px;top:365px;width:248px;height:29px"></div>
<div class="row" style="left:759px;top:395px;width:248px;height:29px"></div>
<div style="left:762px;top:315px;width:8px;height:8px;border-radius:50%;background:#d8d8d8"></div>
<div style="left:762px;top:345px;width:8px;height:8px;border-radius:50%;background:#d8d8d8"></div>
<div style="left:762px;top:375px;width:8px;height:8px;border-radius:50%;background:#d8d8d8"></div>
<div style="left:762px;top:405px;width:8px;height:8px;border-radius:50%;background:#d8d8d8"></div>
<div style="left:784px;top:313px;width:27px;height:10px;background:#222;background-image:repeating-linear-gradient(90deg,#eee 0 2px,#222 2px 3px)"></div>
<div class="c" style="left:785px;top:340px;width:26px;height:18px"></div>
<div class="c" style="left:785px;top:370px;width:26px;height:18px"></div>
<div class="c" style="left:785px;top:400px;width:26px;height:18px"></div>
<svg style="position:absolute;left:785px;top:400px" width="26" height="18"><path d="M4 6h3l-1 7H3zM8 5h3l-1 8H8zM16 6h3l-1 7h-2zM20 7h3l-1 6h-2z" fill="#d9a010"/></svg>
<div class="t" style="left:823px;top:313px;color:#fff;font-weight:bold;font-size:9.500px">Hoidap247</div>
<div class="t" style="left:823px;top:343px;font-size:9.500px;color:#ddd">Lớp3</div>
<div class="t" style="left:823px;top:373px;font-size:9.500px;color:#ddd">Lớp2</div>
<div class="t" style="left:823px;top:403px;font-size:9.500px;color:#ddd">Lớp1</div>
<svg style="position:absolute;left:990px;top:312px" width="14" height="14"><use href="#gear"/></svg>
<div style="left:1008px;top:304px;width:15px;height:139px;background:#2e2e2e"></div>
<div style="left:1008px;top:313px;width:15px;height:121px;background:#6a6a6a;border-radius:4px"></div>
<svg style="position:absolute;left:1008px;top:304px" width="15" height="139"><path d="M4 7l3.500-4L11 7zM4 132l3.500 4 3.500-4z" fill="#aaa"/></svg>
<div class="b" style="left:762px;top:446px;width:17px;height:17px"><svg><use href="#dc"/></svg></div>
<div class="b" style="left:782px;top:446px;width:17px;height:17px"><svg><use href="#ld"/></svg></div>
<div class="b" style="left:802px;top:446px;width:17px;height:17px"><svg><use href="#dc"/></svg></div>
<div class="b" style="left:822px;top:446px;width:23px;height:17px"><svg><use href="#dc"/></svg></div>
<div class="b" style="left:848px;top:446px;width:17px;height:17px"><svg><use href="#fo"/></svg></div>
<div class="b" style="left:873px;top:446px;width:18px;height:17px"><svg><use href="#cp"/></svg></div>
<div class="k" style="left:893px;top:446px;width:18px;height:17px"><svg><use href="#gd"/></svg></div>
<div class="b" style="left:919px;top:446px;width:17px;height:17px"><svg><use href="#tr"/></svg></div>
<!-- brush size -->
<div class="h" style="left:757px;top:472px;width:267px">Brush Size</div>
<svg style="position:absolute;left:1001px;top:475px" width="9" height="9"><use href="#pop"/></svg>
<svg style="position:absolute;left:1012px;top:475px" width="10" height="10"><use href="#xx"/></svg>
<div style="left:757px;top:488px;width:239px;height:43px;background:#555"></div>
<svg style="position:absolute;left:757px;top:488px" width="267" height="43"><path d="M29.500 0v43M59.500 0v43M89.500 0v43M119.500 0v43M149.500 0v43M179.500 0v43M209.500 0v43M0 37.500h239" stroke="#474747"/><rect x="253" y="0" width="14" height="43" fill="#2e2e2e"/><rect x="253" y="10" width="14" height="14" rx="4" fill="#6a6a6a"/><path d="M257 7l3-4 3 4zM257 36l3 4 3-4z" fill="#aaa"/>
<circle cx="45" cy="14" r=".8" fill="#888"/><circle cx="75" cy="14" r="1" fill="#ccc"/><circle cx="105" cy="14" r="1.200" fill="#eee"/><circle cx="135" cy="14" r="1.700" fill="#fff"/><circle cx="165" cy="14" r="1.800" fill="#fff"/><circle cx="195" cy="14" r="2.600" fill="#fff"/><circle cx="225" cy="14" r="4" fill="#fff"/></svg>
<div class="t" style="left:769px;top:514px;color:#ddd;font-size:8.500px">1</div>
<div class="t" style="left:794px;top:514px;color:#ddd;font-size:8.500px">1.5</div>
<div class="t" style="left:829px;top:514px;color:#ddd;font-size:8.500px">2</div>
<div class="t" style="left:859px;top:514px;color:#ddd;font-size:8.500px">3</div>
<div class="t" style="left:889px;top:514px;color:#ddd;font-size:8.500px">4</div>
<div class="t" style="left:919px;top:514px;color:#ddd;font-size:8.500px">5</div>
<div class="t" style="left:949px;top:514px;color:#ddd;font-size:8.500px">7</div>
<div class="t" style="left:977px;top:514px;color:#ddd;font-size:8.500px">10</div>
</div></body></html>
